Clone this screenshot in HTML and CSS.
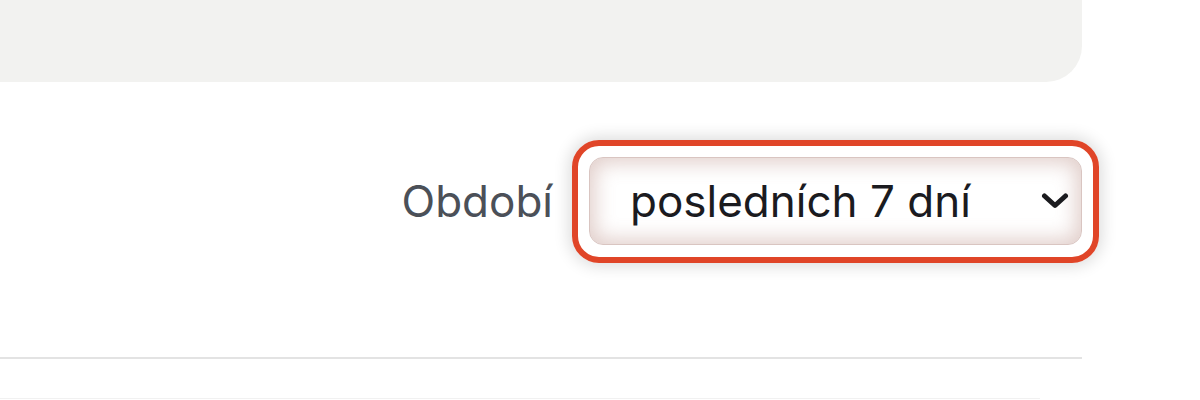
FILE: index.html
```html
<!DOCTYPE html>
<html lang="cs">
<head>
<meta charset="utf-8">
<title>Období</title>
<link rel="stylesheet" href="styles.css">
</head>
<body>
<div class="page">
  <div class="panel"></div>
  <div class="toolbar">
    <label class="label" for="period">Období</label>
    <div class="select" id="period" role="combobox" aria-expanded="false">
      <span class="select-value">posledních 7 dní</span>
      <svg class="chevron" width="28" height="18" viewBox="0 0 28 18" aria-hidden="true">
        <path d="M3.5 4 L14 13.5 L24.5 4" fill="none" stroke="#1b1b1f" stroke-width="5" stroke-linecap="round" stroke-linejoin="round"/>
      </svg>
    </div>
  </div>
  <div class="divider"></div>
  <div class="next-row"></div>
</div>
</body>
</html>
```

FILE: styles.css
```css
* { box-sizing: border-box; }

html, body {
  margin: 0;
  padding: 0;
  background: #ffffff;
  font-family: Inter, "Noto Sans", sans-serif;
}

.page {
  width: 1082px;
}

.panel {
  height: 82px;
  background: #f2f2f0;
  border-radius: 0 0 36px 0;
}

.toolbar {
  display: flex;
  justify-content: flex-end;
  align-items: center;
  gap: 36px;
  margin-top: 75px;
  height: 88px;
}

.label {
  font-size: 44px;
  color: #4b5058;
  line-height: 1;
}

.select {
  position: relative;
  width: 493px;
  height: 88px;
  display: flex;
  align-items: center;
  justify-content: space-between;
  padding: 0 12px 0 40px;
  border: 1px solid #d9c5c1;
  border-radius: 14px;
  background: #ffffff;
  box-shadow: inset 0 0 20px 5px rgba(165, 105, 95, 0.33);
}

.select::after {
  content: "";
  position: absolute;
  top: -18px;
  left: -18px;
  right: -18px;
  bottom: -19px;
  border: 6px solid #e04528;
  border-radius: 27px;
  box-shadow: 0 0 16px 3px rgba(0, 0, 0, 0.14);
  pointer-events: none;
}

.select-value {
  font-size: 44px;
  color: #1b1b1f;
  line-height: 1;
}

.chevron {
  display: block;
}

.divider {
  margin-top: 112px;
  height: 2px;
  background: #e3e3e3;
}

.next-row {
  margin-top: 39px;
  width: 1040px;
  border-top: 1px solid #f1f1f1;
}
```
